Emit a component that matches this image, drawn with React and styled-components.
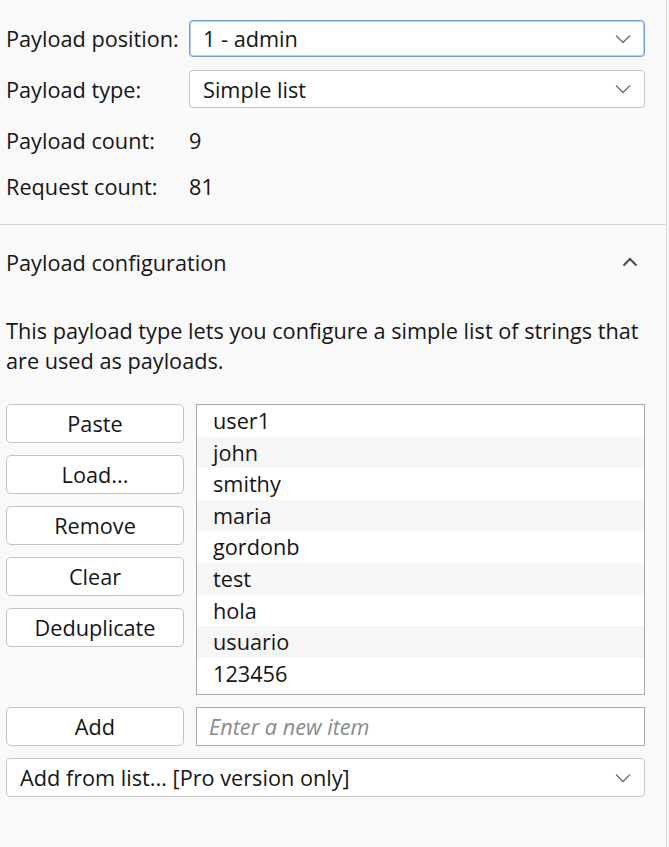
import React from "react";
import styled, { createGlobalStyle } from "styled-components";

const GlobalStyle = createGlobalStyle`
  html, body {
    margin: 0;
    padding: 0;
    background: #f9f9f9;
  }
  body {
    font-family: "Open Sans", "Noto Sans", "Liberation Sans", sans-serif;
    font-size: 21.7px;
    color: #161616;
  }
  * { box-sizing: border-box; }
`;

const Page = styled.div`
  width: 669px;
  height: 847px;
  display: flex;
  background: #f9f9f9;
`;

const Panel = styled.div`
  width: 667px;
  height: 847px;
  border-right: 1px solid #dadada;
  display: flex;
  flex-direction: column;
`;

const TopSection = styled.section`
  padding: 20px 21px 24px 6px;
  border-bottom: 1px solid #d6d6d6;
`;

const FormGrid = styled.div`
  display: grid;
  grid-template-columns: 183px 1fr;
  grid-template-rows: 37px 38px 38px 28px;
  row-gap: 13px;
  align-items: center;
`;

const Label = styled.span`
  white-space: nowrap;
`;

const Value = styled.span``;

const Select = styled.div`
  height: 100%;
  display: flex;
  align-items: center;
  justify-content: space-between;
  padding: 0 13px 0 13px;
  background: #fff;
  border: 1px solid ${(p) => (p.$focused ? "#6b9fdd" : "#c6c6c6")};
  box-shadow: ${(p) => (p.$focused ? "inset 0 0 0 1px #b6d0f1" : "none")};
  border-radius: 4px;
  white-space: nowrap;
`;

const ConfigSection = styled.section`
  padding: 18px 21px 0 6px;
`;

const Header = styled.div`
  height: 38px;
  display: flex;
  align-items: center;
  justify-content: space-between;
  padding-right: 7px;
`;

const Description = styled.p`
  margin: 35px 0 0 0;
  line-height: 30px;
  white-space: nowrap;
`;

const ListArea = styled.div`
  margin-top: 28px;
  display: grid;
  grid-template-columns: 178px 1fr;
  column-gap: 12px;
`;

const ButtonColumn = styled.div`
  display: flex;
  flex-direction: column;
  gap: 12px;
`;

const Button = styled.button`
  height: 39px;
  width: 100%;
  background: #fff;
  border: 1px solid #c4c4c4;
  border-radius: 5px;
  font: inherit;
  color: #161616;
  padding: 0;
  cursor: pointer;
`;

const ListBox = styled.ul`
  list-style: none;
  margin: 0;
  padding: 0;
  height: 291px;
  background: #fff;
  border: 1px solid #a9a9a9;
  overflow: hidden;
`;

const ListItem = styled.li`
  height: 31.6px;
  line-height: 31.6px;
  padding-left: 16px;
  background: ${(p) => (p.$alt ? "#f6f6f6" : "#fff")};
`;

const AddRow = styled.div`
  margin-top: 12px;
  display: grid;
  grid-template-columns: 178px 1fr;
  column-gap: 12px;
`;

const Input = styled.input`
  height: 39px;
  width: 100%;
  border: 1px solid #a9a9a9;
  background: #fff;
  padding: 0 12px;
  font: inherit;
  color: #161616;
  outline: none;
  &::placeholder {
    color: #8a8a8a;
    font-style: italic;
  }
`;

const FullSelectWrap = styled.div`
  margin-top: 12px;
  height: 39px;
`;

const ChevronDown = () => (
  <svg width="16" height="10" viewBox="0 0 16 10" fill="none">
    <path d="M1 1.5 L8 8.5 L15 1.5" stroke="#6e6e6e" strokeWidth="1.3" />
  </svg>
);

const ChevronUp = () => (
  <svg width="16" height="10" viewBox="0 0 16 10" fill="none">
    <path d="M1.5 8.5 L8 2 L14.5 8.5" stroke="#4a4a4a" strokeWidth="2" />
  </svg>
);

const items = ["user1", "john", "smithy", "maria", "gordonb", "test", "hola", "usuario", "123456"];
const buttons = ["Paste", "Load...", "Remove", "Clear", "Deduplicate"];

export default function App() {
  return (
    <Page>
      <GlobalStyle />
      <Panel>
        <TopSection>
          <FormGrid>
            <Label>Payload position:</Label>
            <Select $focused>
              <span>1 - admin</span>
              <ChevronDown />
            </Select>
            <Label>Payload type:</Label>
            <Select>
              <span>Simple list</span>
              <ChevronDown />
            </Select>
            <Label>Payload count:</Label>
            <Value>9</Value>
            <Label>Request count:</Label>
            <Value>81</Value>
          </FormGrid>
        </TopSection>
        <ConfigSection>
          <Header>
            <span>Payload configuration</span>
            <ChevronUp />
          </Header>
          <Description>
            This payload type lets you configure a simple list of strings that
            <br />
            are used as payloads.
          </Description>
          <ListArea>
            <ButtonColumn>
              {buttons.map((b) => (
                <Button key={b}>{b}</Button>
              ))}
            </ButtonColumn>
            <ListBox>
              {items.map((it, i) => (
                <ListItem key={it} $alt={i % 2 === 1}>
                  {it}
                </ListItem>
              ))}
            </ListBox>
          </ListArea>
          <AddRow>
            <Button>Add</Button>
            <Input placeholder="Enter a new item" />
          </AddRow>
          <FullSelectWrap>
            <Select>
              <span>Add from list... [Pro version only]</span>
              <ChevronDown />
            </Select>
          </FullSelectWrap>
        </ConfigSection>
      </Panel>
    </Page>
  );
}
